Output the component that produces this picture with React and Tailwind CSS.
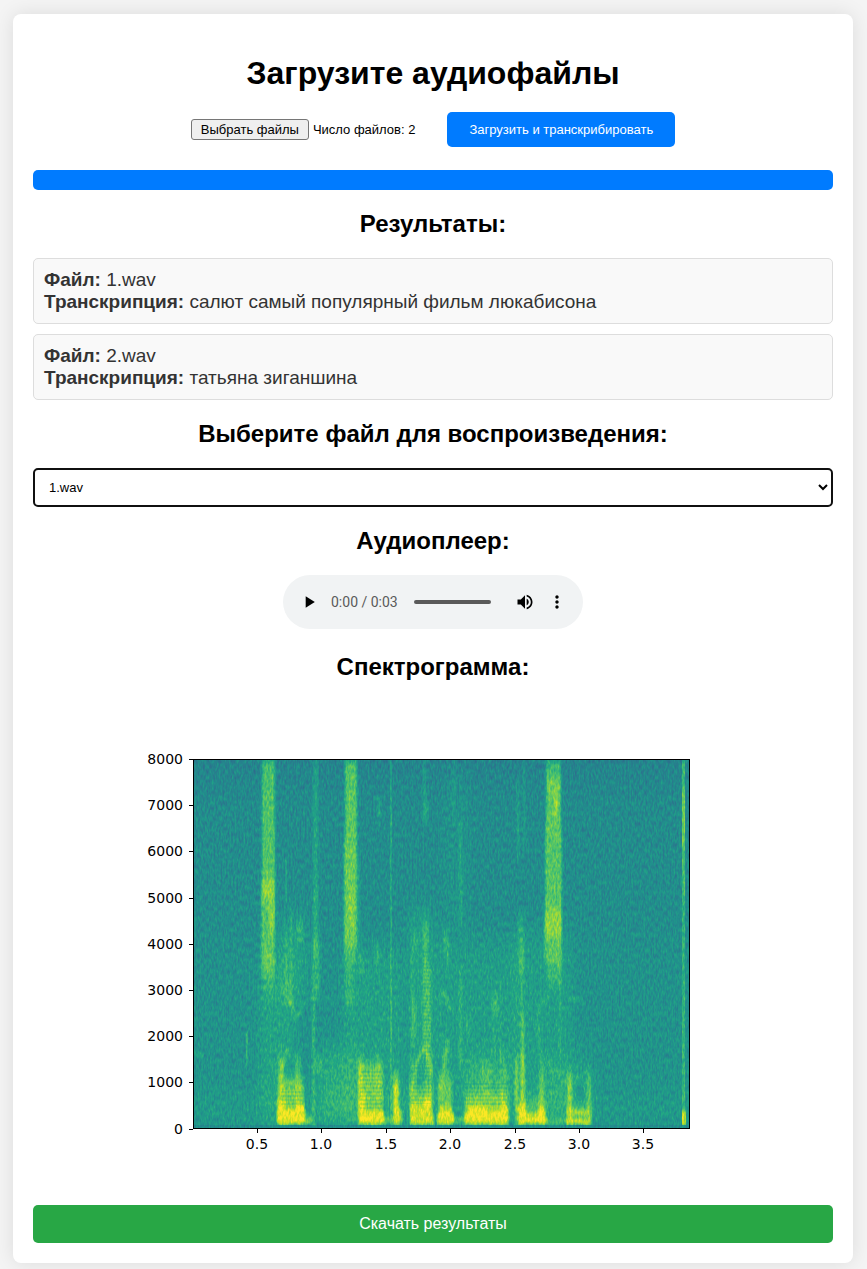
import { useState } from "react";

const results = [
  { file: "1.wav", text: "салют самый популярный фильм люкабисона" },
  { file: "2.wav", text: "татьяна зиганшина" },
];

const freqTicks = [8000, 7000, 6000, 5000, 4000, 3000, 2000, 1000, 0];
const timeTicks = ["0.5", "1.0", "1.5", "2.0", "2.5", "3.0", "3.5"];

// Energy patches in plot coordinates: x, y, width, height, added intensity.
const hazePatches = [
  [66, 200, 36, 165, 0.14],
  [84, 160, 30, 80, 0.14],
  [127, 290, 38, 76, 0.2],
  [150, 190, 60, 175, 0.12],
  [216, 150, 24, 200, 0.16],
  [240, 180, 90, 150, 0.1],
  [272, 300, 44, 60, 0.22],
  [250, 10, 26, 160, 0.06],
  [320, 170, 60, 190, 0.1],
  [100, 330, 300, 36, 0.1],
  [400, 335, 96, 34, 0.05],
  [0, 335, 90, 30, 0.07],
  [350, 300, 50, 60, 0.12],
  [0, 180, 496, 186, 0.02],
];

const columns = [
  [69, 0, 13, 140, 0.46],
  [68, 120, 14, 92, 0.46],
  [76, 143, 6, 30, 0.35],
  [70, 205, 11, 30, 0.22],
  [120, 0, 5, 140, 0.2],
  [120, 135, 5, 60, 0.26],
  [119, 185, 3, 182, 0.3],
  [122, 180, 5, 60, 0.26],
  [122, 300, 7, 12, 0.35],
  [92, 170, 2, 70, 0.25],
  [97, 150, 2, 90, 0.25],
  [104, 160, 6, 22, 0.25],
  [152, 0, 12, 80, 0.5],
  [151, 80, 13, 108, 0.54],
  [156, 130, 5, 35, 0.24],
  [151, 185, 12, 20, 0.3],
  [152, 200, 9, 50, 0.2],
  [165, 100, 2, 120, 0.2],
  [184, 40, 4, 22, 0.2],
  [182, 185, 5, 22, 0.22],
  [230, 0, 3, 65, 0.2],
  [231, 44, 4, 14, 0.25],
  [230, 160, 5, 50, 0.28],
  [219, 175, 5, 16, 0.2],
  [250, 172, 6, 18, 0.28],
  [253, 190, 3, 20, 0.25],
  [266, 60, 3, 110, 0.18],
  [266, 210, 3, 100, 0.22],
  [260, 0, 2, 60, 0.14],
  [218, 190, 2, 100, 0.22],
  [219, 240, 4, 40, 0.22],
  [230, 205, 8, 90, 0.32],
  [272, 262, 6, 10, 0.25],
  [299, 235, 6, 25, 0.28],
  [300, 270, 2, 25, 0.25],
  [307, 220, 1, 90, 0.22],
  [324, 20, 2, 80, 0.24],
  [330, 0, 2, 90, 0.18],
  [325, 155, 6, 60, 0.2],
  [353, 0, 15, 30, 0.42],
  [353, 22, 15, 50, 0.5],
  [352, 70, 17, 110, 0.48],
  [361, 36, 4, 18, 0.5],
  [351, 150, 18, 54, 0.34],
  [354, 192, 14, 36, 0.24],
  [366, 185, 2, 110, 0.2],
  [85, 320, 26, 44, 0.5],
  [85, 296, 6, 60, 0.36],
  [102, 296, 6, 55, 0.34],
  [165, 305, 25, 60, 0.5],
  [165, 298, 5, 60, 0.42],
  [183, 295, 4, 50, 0.25],
  [200, 315, 6, 50, 0.6],
  [217, 330, 23, 35, 0.5],
  [217, 300, 6, 40, 0.25],
  [232, 292, 7, 50, 0.3],
  [245, 318, 14, 47, 0.45],
  [249, 280, 7, 40, 0.2],
  [272, 334, 43, 31, 0.52],
  [288, 305, 10, 30, 0.2],
  [307, 320, 5, 40, 0.3],
  [322, 300, 3, 64, 0.55],
  [328, 255, 3, 110, 0.42],
  [327, 295, 5, 60, 0.36],
  [328, 190, 2, 70, 0.25],
  [346, 310, 5, 54, 0.38],
  [325, 340, 28, 25, 0.3],
  [374, 315, 5, 50, 0.5],
  [394, 315, 4, 50, 0.38],
  [374, 350, 25, 15, 0.4],
];

// Sharp transients and thin lines.
const lines = [
  [92, 98, 2, 45, 0.16],
  [53, 272, 2, 36, 0.24],
  [197, 0, 2, 362, 0.2],
  [375, 240, 15, 3, 0.22],
  [0, 294, 11, 3, 0.34],
  [489, 0, 3, 30, 0.4],
  [489, 30, 3, 60, 0.55],
  [489, 90, 3, 50, 0.38],
  [489, 140, 3, 225, 0.28],
  [489, 352, 4, 15, 0.75],
];

// Strong low-frequency bands.
const cores = [
  [84, 350, 28, 15, 0.88],
  [84, 340, 9, 12, 0.6],
  [103, 344, 8, 12, 0.8],
  [112, 358, 7, 7, 0.6],
  [166, 352, 25, 13, 0.85],
  [167, 334, 5, 18, 0.8],
  [201, 350, 8, 15, 0.65],
  [201, 325, 4, 30, 0.5],
  [217, 357, 24, 8, 0.8],
  [217, 344, 8, 13, 0.65],
  [226, 347, 12, 9, 0.75],
  [231, 338, 7, 12, 0.8],
  [244, 354, 17, 11, 0.85],
  [247, 347, 12, 8, 0.6],
  [271, 354, 44, 11, 0.8],
  [275, 347, 20, 12, 0.8],
  [298, 350, 18, 10, 0.55],
  [309, 345, 5, 12, 0.7],
  [325, 359, 29, 6, 0.85],
  [325, 346, 8, 18, 0.8],
  [333, 354, 14, 8, 0.6],
  [345, 348, 7, 16, 0.85],
  [354, 359, 19, 5, 0.35],
  [373, 360, 24, 5, 0.85],
  [374, 351, 22, 4, 0.7],
  [190, 358, 12, 7, 0.4],
  [258, 358, 12, 7, 0.35],
];

// Stroke path and added intensity of each formant track.
const formants = [
  ["M87 322 Q89 300 97 288", 0.3],
  ["M93 250 L98 243 L103 260 L110 245", 0.26],
  ["M86 225 L98 243 M96 225 L99 245", 0.2],
  ["M217 338 Q222 305 231 288 Q238 300 239 318", 0.38],
  ["M246 335 Q249 320 255 282", 0.26],
  ["M247 242 L251 232 L258 252", 0.28],
  ["M345 254 Q347 240 356 238", 0.24],
  ["M345 260 Q345 290 350 310", 0.2],
  ["M352 300 L372 320", 0.2],
  ["M374 316 Q386 322 398 312", 0.14],
  ["M308 290 L314 325", 0.22],
  ["M75 303 L88 306", 0.18],
  ["M66 240 Q100 246 130 240 T180 243", 0.12],
  ["M168 195 L170 215", 0.2],
];

const rects = (list) =>
  list.map(([x, y, w, h, a], i) => (
    <rect key={i} x={x} y={y} width={w} height={h} fill="#fff" fillOpacity={a} />
  ));

function Spectrogram() {
  return (
    <svg
      viewBox="0 0 640 480"
      className="mx-auto block w-full max-w-[640px]"
      role="img"
      aria-labelledby="spectrogram-title"
    >
      <defs>
        <filter id="colormap" x="0" y="0" width="496" height="369" filterUnits="userSpaceOnUse" colorInterpolationFilters="sRGB">
          <feTurbulence type="fractalNoise" baseFrequency="0.57 0.19" numOctaves="2" seed="11" />
          <feColorMatrix values="1 0 0 0 0  1 0 0 0 0  1 0 0 0 0  0 0 0 0 1" result="noise" />
          <feComposite in="SourceGraphic" in2="noise" operator="arithmetic" k1="0" k2="1" k3="0.29" k4="-0.145" />
          <feComponentTransfer>
            <feFuncR type="table" tableValues=".267 .282 .255 .208 .165 .129 .133 .267 .478 .741 .992" />
            <feFuncG type="table" tableValues=".004 .141 .267 .373 .471 .569 .659 .749 .82 .875 .906" />
            <feFuncB type="table" tableValues=".329 .459 .529 .553 .557 .549 .518 .439 .318 .149 .145" />
          </feComponentTransfer>
        </filter>
        <filter id="wide" x="-60" y="-60" width="620" height="500" filterUnits="userSpaceOnUse" colorInterpolationFilters="sRGB">
          <feGaussianBlur stdDeviation="5 12" />
        </filter>
        <filter id="tall" x="-60" y="-60" width="620" height="500" filterUnits="userSpaceOnUse" colorInterpolationFilters="sRGB">
          <feGaussianBlur stdDeviation="1 6" />
        </filter>
        <filter id="soft" x="-60" y="-60" width="620" height="500" filterUnits="userSpaceOnUse" colorInterpolationFilters="sRGB">
          <feGaussianBlur stdDeviation="0.8 2" />
        </filter>
        <filter id="tight" x="-60" y="-60" width="620" height="500" filterUnits="userSpaceOnUse" colorInterpolationFilters="sRGB">
          <feGaussianBlur stdDeviation="0.5 2" />
        </filter>
        <linearGradient id="floor" x1="0" y1="0" x2="0" y2="1">
          <stop offset="0" stopColor="#727272" />
          <stop offset="0.12" stopColor="#7a7a7a" />
          <stop offset="1" stopColor="#838383" />
        </linearGradient>
        <pattern id="harmonics" width="8" height="4" patternUnits="userSpaceOnUse">
          <rect width="8" height="2" fill="#555" fillOpacity="0.1" />
        </pattern>
        <clipPath id="plot">
          <rect width="496" height="369" />
        </clipPath>
      </defs>
      <g transform="translate(80 58)">
        <g clipPath="url(#plot)">
          <g filter="url(#colormap)">
            <rect width="496" height="369" fill="url(#floor)" />
            <g filter="url(#wide)">{rects(hazePatches)}</g>
            <g filter="url(#tall)">{rects(columns)}</g>
            <g filter="url(#soft)">
              {formants.map(([d, a]) => (
                <path key={d} d={d} fill="none" stroke="#fff" strokeOpacity={a} strokeWidth="3" />
              ))}
              {rects(cores)}
            </g>
            <g filter="url(#tight)">{rects(lines)}</g>
            <rect x="230" y="190" width="8" height="110" fill="url(#harmonics)" />
            <rect x="167" y="310" width="22" height="40" fill="url(#harmonics)" />
            <rect x="218" y="305" width="20" height="40" fill="url(#harmonics)" />
            <rect x="272" y="324" width="42" height="24" fill="url(#harmonics)" />
            <rect x="88" y="330" width="22" height="18" fill="url(#harmonics)" />
            <ellipse cx="387" cy="334" rx="4" ry="8" fill="#777" fillOpacity="0.5" />
            <rect y="366" width="496" height="3" fill="#7a7a7a" fillOpacity="0.85" />
          </g>
        </g>
        <rect x="0.5" y="0.5" width="496" height="369" fill="none" stroke="#000" />
        <g stroke="#000">
          {freqTicks.map((f, i) => (
            <path key={f} d={`M-4 ${Math.round(i * 46.2) + 0.5}H0`} />
          ))}
          {timeTicks.map((t, i) => (
            <path key={t} d={`M${Math.round(64 + i * 64.4) + 0.5} 370v4`} />
          ))}
        </g>
        <g className="font-['DejaVu_Sans',sans-serif] text-[14px]" fill="#000">
          {freqTicks.map((f, i) => (
            <text key={f} x="-10" y={Math.round(i * 46.2) + 5} textAnchor="end">
              {f}
            </text>
          ))}
          {timeTicks.map((t, i) => (
            <text key={t} x={Math.round(64 + i * 64.4)} y="390" textAnchor="middle">
              {t}
            </text>
          ))}
        </g>
      </g>
    </svg>
  );
}

function Player() {
  return (
    <div
      role="group"
      aria-labelledby="player-title"
      className="mx-auto flex h-[54px] w-[300px] items-center rounded-full bg-[#f1f3f4] px-4"
    >
      <button type="button" aria-label="Воспроизвести">
        <svg viewBox="0 0 24 24" className="size-5" fill="#000">
          <path d="M8 5v14l11-7z" />
        </svg>
      </button>
      <span className="ml-3 whitespace-nowrap font-[Roboto,sans-serif] text-[14px] text-[#5a5a5a]">0:00 / 0:03</span>
      <input
        type="range"
        aria-label="Позиция"
        min="0"
        max="3"
        defaultValue="0"
        className="mx-4 h-1 w-0 min-w-0 flex-1 appearance-none rounded-full bg-[#5a5a5a] [&::-webkit-slider-thumb]:size-0 [&::-webkit-slider-thumb]:appearance-none"
      />
      <button type="button" aria-label="Громкость" className="ml-2">
        <svg viewBox="0 0 24 24" className="size-5" fill="#000">
          <path d="M3 9v6h4l5 5V4L7 9H3zm13.500 3c0-1.770-1.020-3.290-2.500-4.030v8.050c1.480-.73 2.500-2.250 2.500-4.020zM14 3.230v2.060c2.890.86 5 3.540 5 6.710s-2.110 5.850-5 6.710v2.060c4.010-.91 7-4.490 7-8.770s-2.990-7.860-7-8.770z" />
        </svg>
      </button>
      <button type="button" aria-label="Ещё" className="ml-3">
        <svg viewBox="0 0 24 24" className="size-5" fill="#000">
          <path d="M12 8c1.100 0 2-.9 2-2s-.9-2-2-2-2 .9-2 2 .9 2 2 2zm0 2c-1.100 0-2 .9-2 2s.9 2 2 2 2-.9 2-2-.9-2-2-2zm0 6c-1.100 0-2 .9-2 2s.9 2 2 2 2-.9 2-2-.9-2-2-2z" />
        </svg>
      </button>
    </div>
  );
}

function Heading({ id, children }) {
  return (
    <h2 id={id} className="my-5 text-center text-2xl leading-7 font-bold">
      {children}
    </h2>
  );
}

export default function App() {
  const [file, setFile] = useState("1.wav");
  return (
    <div className="min-h-screen bg-[#f4f4f4] pt-[14px] pr-[14px] pb-[6px] pl-[13px] font-['Liberation_Sans',Arial,sans-serif] text-black">
      <main className="mx-auto max-w-[840px] rounded-lg bg-white px-5 pt-[41px] pb-5 shadow-[0_0_20px_rgba(0,0,0,0.1)]">
        <h1 className="text-center text-[32px] leading-9 font-bold">Загрузите аудиофайлы</h1>

        <form className="mt-[21px] flex flex-wrap items-center justify-center gap-8" onSubmit={(e) => e.preventDefault()}>
          <div className="relative flex items-center gap-1 text-[13px] leading-[15px]">
            <input id="files" type="file" multiple className="sr-only" />
            <label htmlFor="files" className="rounded-[3px] border border-[#767676] bg-[#efefef] px-[9px] py-[2px]">
              Выбрать файлы
            </label>
            <span>Число файлов: 2</span>
          </div>
          <button type="submit" className="rounded-[5px] bg-[#007bff] px-[22px] py-[10px] text-[13px] leading-[15px] text-white">
            Загрузить и транскрибировать
          </button>
        </form>

        <div
          role="progressbar"
          aria-label="Загрузка"
          aria-valuenow={100}
          className="mt-[23px] h-5 rounded-[5px] bg-[#007bff]"
        />

        <Heading>Результаты:</Heading>
        <ul className="flex flex-col gap-[10px]">
          {results.map((r) => (
            <li
              key={r.file}
              className="rounded-[5px] border border-[#dddddd] bg-[#f9f9f9] p-[10px] text-[19px] leading-[22px] text-[#333333]"
            >
              <p>
                <strong>Файл:</strong> {r.file}
              </p>
              <p>
                <strong>Транскрипция:</strong> {r.text}
              </p>
            </li>
          ))}
        </ul>

        <Heading id="select-title">Выберите файл для воспроизведения:</Heading>
        <select
          aria-labelledby="select-title"
          value={file}
          onChange={(e) => setFile(e.target.value)}
          className="block h-[39px] w-full rounded-[5px] border-2 border-[#101010] bg-white pl-[10px] text-[13px]"
        >
          {results.map((r) => (
            <option key={r.file}>{r.file}</option>
          ))}
        </select>

        <Heading id="player-title">Аудиоплеер:</Heading>
        <Player />

        <div className="pt-1">
          <Heading id="spectrogram-title">Спектрограмма:</Heading>
        </div>
        <Spectrogram />

        <button type="button" className="mt-6 w-full rounded-[5px] bg-[#28a745] py-[10px] text-[16px] leading-[18px] text-white">
          Скачать результаты
        </button>
      </main>
    </div>
  );
}
